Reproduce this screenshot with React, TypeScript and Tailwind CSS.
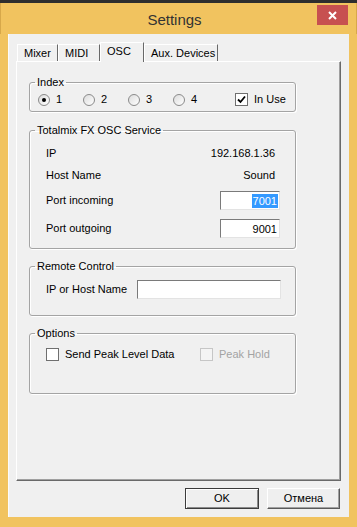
import React from 'react'

function Radio({ label, checked }: { label: string; checked?: boolean }) {
  return (
    <div className="flex w-[45px] items-center">
      <span className="flex h-[12px] w-[12px] items-center justify-center rounded-full border border-[#8a8a8a] bg-gradient-to-br from-[#dcdcdc] to-white">
        {checked && <span className="h-[4px] w-[4px] rounded-full bg-black" />}
      </span>
      <span className="ml-[6px]">{label}</span>
    </div>
  )
}

function Check({ label, checked, disabled }: { label: string; checked?: boolean; disabled?: boolean }) {
  return (
    <div className={disabled ? 'flex items-center text-[#a3a3a3]' : 'flex items-center'}>
      <span
        className={
          disabled
            ? 'flex h-[13px] w-[13px] items-center justify-center border border-[#c6c6c6] bg-[#f4f4f4]'
            : 'flex h-[13px] w-[13px] items-center justify-center border border-[#6f6f6f] bg-white'
        }
      >
        {checked && (
          <svg width="9" height="9" viewBox="0 0 9 9">
            <path d="M1 4.5 L3.5 7 L8 1.5" fill="none" stroke="#000" strokeWidth="1.8" />
          </svg>
        )}
      </span>
      <span className="ml-[6px]">{label}</span>
    </div>
  )
}

function Group({ title, className, children }: { title: string; className: string; children: React.ReactNode }) {
  return (
    <fieldset className={`rounded-[3px] border border-[#a4a4a4] shadow-[inset_1px_1px_0_#fff,1px_1px_0_#fff] ${className}`}>
      <legend className="ml-[5px] px-[2px] leading-[13px]">{title}</legend>
      {children}
    </fieldset>
  )
}

function Field({ value, selected, className }: { value?: string; selected?: boolean; className: string }) {
  return (
    <div
      className={`flex h-[19px] items-center justify-end border border-t-[#7a7a7a] border-l-[#7a7a7a] border-r-[#e3e3e3] border-b-[#e3e3e3] bg-white pr-[1px] ${className}`}
    >
      {value && (
        <span className={selected ? 'bg-[#3399ff] px-[1px] leading-[14px] text-white' : 'px-[1px] leading-[14px]'}>
          {value}
        </span>
      )}
    </div>
  )
}

function Tab({ label, width, active }: { label: string; width: string; active?: boolean }) {
  if (active) {
    return (
      <div
        className={`relative z-10 -mb-[1px] flex h-[20px] items-start border-t border-l border-r border-t-white border-l-white border-r-[#696969] bg-[#f0f0f0] pl-[6px] pt-[2px] ${width}`}
      >
        {label}
      </div>
    )
  }
  return (
    <div
      className={`flex h-[17px] items-center border-t border-l border-r border-t-white border-l-white border-r-[#696969] pl-[6px] ${width}`}
    >
      {label}
    </div>
  )
}

export default function App() {
  return (
    <div className="flex h-[527px] w-[357px] flex-col bg-[#f1c35f] font-['Liberation_Sans',Arial,sans-serif] text-[11px] leading-[13px] text-black">
      {/* desktop strip behind the window */}
      <div className="h-[3px] bg-[#2e2e2e]" />

      {/* title bar */}
      <div className="flex h-[31px] items-start border-l border-r border-[#d7a84a]">
        <div className="flex-1" />
        <div className="pt-[8px] text-[15px] leading-[18px] text-[#333]">Settings</div>
        <div className="flex flex-1 justify-end pr-[8px] pt-[2px]">
          <div className="flex h-[20px] w-[31px] items-center justify-center bg-[#c75050]">
            <svg width="9" height="9" viewBox="0 0 9 9">
              <path d="M1 1 L8 8 M8 1 L1 8" stroke="#fff" strokeWidth="2" />
            </svg>
          </div>
        </div>
      </div>

      {/* client area */}
      <div className="mx-[8px] mb-[10px] flex flex-1 flex-col border-l border-[#fbfbfb] bg-[#f0f0f0] pl-[7px] pr-[8px] pt-[8px]">
        {/* tabs */}
        <div className="flex h-[19px] items-end pl-[1px]">
          <Tab label="Mixer" width="w-[41px]" />
          <Tab label="MIDI" width="w-[42px]" />
          <Tab label="OSC" width="w-[44px]" active />
          <Tab label="Aux. Devices" width="w-[74px]" />
        </div>

        {/* tab panel */}
        <div className="flex h-[420px] flex-col border border-t-white border-l-white border-r-[#696969] border-b-[#696969] pl-[12px] pt-[14px] shadow-[inset_-1px_-1px_0_#a0a0a0]">
          <Group title="Index" className="h-[36px] w-[267px]">
            <div className="flex items-center pl-[8px] pt-[4px]">
              <Radio label="1" checked />
              <Radio label="2" />
              <Radio label="3" />
              <Radio label="4" />
              <div className="ml-[17px]">
                <Check label="In Use" checked />
              </div>
            </div>
          </Group>

          <Group title="Totalmix FX OSC Service" className="mt-[12px] h-[125px] w-[267px]">
            <div className="flex flex-col pl-[16px] pr-[15px]">
              <div className="mt-[6px] flex h-[20px] items-center justify-between">
                <span>IP</span>
                <span className="pr-[5px]">192.168.1.36</span>
              </div>
              <div className="mt-[2px] flex h-[20px] items-center justify-between">
                <span>Host Name</span>
                <span className="pr-[5px]">Sound</span>
              </div>
              <div className="mt-[6px] flex h-[19px] items-center justify-between">
                <span>Port incoming</span>
                <Field value="7001" selected className="w-[60px]" />
              </div>
              <div className="mt-[9px] flex h-[19px] items-center justify-between">
                <span>Port outgoing</span>
                <Field value="9001" className="w-[60px]" />
              </div>
            </div>
          </Group>

          <Group title="Remote Control" className="mt-[11px] h-[56px] w-[267px]">
            <div className="mt-[7px] flex h-[19px] items-center justify-between pl-[16px] pr-[14px]">
              <span>IP or Host Name</span>
              <Field className="w-[144px]" />
            </div>
          </Group>

          <Group title="Options" className="mt-[11px] h-[67px] w-[267px]">
            <div className="mt-[8px] flex items-center pl-[16px]">
              <div className="w-[154px]">
                <Check label="Send Peak Level Data" />
              </div>
              <Check label="Peak Hold" disabled />
            </div>
          </Group>
        </div>

        {/* buttons */}
        <div className="mt-[7px] flex justify-end gap-[8px] pr-[1px]">
          <button className="h-[21px] w-[74px] border border-[#3c3c3c] bg-[#efefef] shadow-[inset_1px_1px_0_#fff,inset_-1px_-1px_0_#8a8a8a]">
            OK
          </button>
          <button className="h-[21px] w-[73px] border border-t-white border-l-white border-r-[#5a5a5a] border-b-[#5a5a5a] bg-[#efefef] shadow-[inset_-1px_-1px_0_#a0a0a0]">
            Отмена
          </button>
        </div>
      </div>
    </div>
  )
}
